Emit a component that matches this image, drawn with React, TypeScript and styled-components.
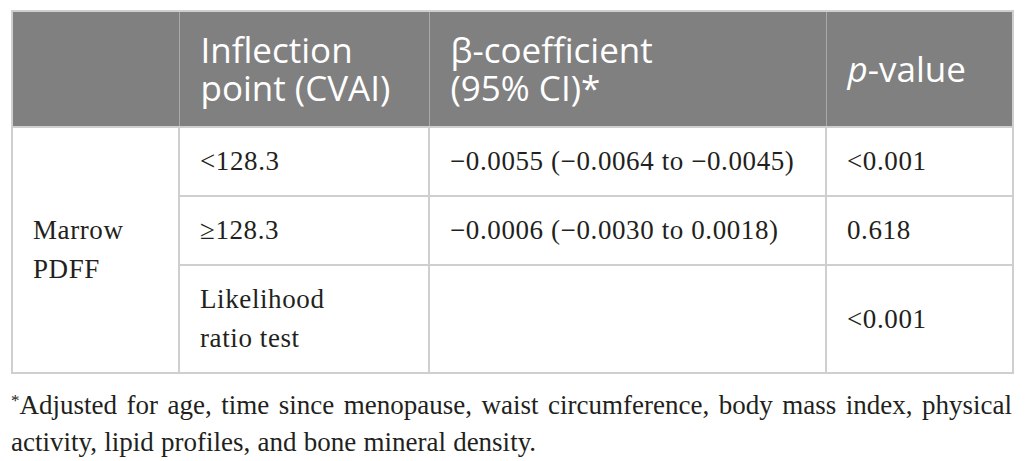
import styled, { createGlobalStyle } from "styled-components";

const GlobalStyle = createGlobalStyle`
  html, body {
    margin: 0;
    padding: 0;
    background: #ffffff;
  }
`;

const Page = styled.div`
  padding: 10px 14px 0 11px;
  width: 1001px;
`;

const Table = styled.table`
  width: 1001px;
  border-collapse: collapse;
  table-layout: fixed;
  border: 2px solid #cfcfcf;
`;

const HeadCell = styled.th`
  background: #808080;
  color: #ffffff;
  font-family: "Open Sans", "DejaVu Sans", sans-serif;
  font-weight: 400;
  font-size: 35px;
  line-height: 38px;
  text-align: left;
  vertical-align: middle;
  white-space: nowrap;
  padding: 19px 10px 19px 21px;
  border-left: 1px solid #a9a9a9;
  border-right: 1px solid #a9a9a9;
`;

const Cell = styled.td`
  font-family: "Liberation Serif", "Times New Roman", serif;
  font-size: 27px;
  letter-spacing: 0.6px;
  line-height: 39px;
  color: #231f20;
  padding: 14px 10px 14px 20px;
  border: 2px solid #cfcfcf;
  vertical-align: middle;
  white-space: nowrap;
`;

const Note = styled.p`
  margin: 13px 0 0 0;
  font-family: "Liberation Serif", "Times New Roman", serif;
  font-size: 27px;
  line-height: 37px;
  word-spacing: 0.5px;
  color: #231f20;
  text-align: justify;
`;

const Sup = styled.span`
  display: inline-block;
  font-size: 17px;
  line-height: 17px;
  vertical-align: top;
  margin-top: 5px;
`;

const rows = [
  { point: ["<128.3"], beta: "\u22120.0055 (\u22120.0064 to \u22120.0045)", p: "<0.001" },
  { point: ["\u2265128.3"], beta: "\u22120.0006 (\u22120.0030 to 0.0018)", p: "0.618" },
  { point: ["Likelihood", "ratio test"], beta: "", p: "<0.001" },
];

export default function App() {
  return (
    <>
      <GlobalStyle />
      <Page>
        <Table>
          <colgroup>
            <col style={{ width: 167 }} />
            <col style={{ width: 250 }} />
            <col style={{ width: 397 }} />
            <col style={{ width: 187 }} />
          </colgroup>
          <thead>
            <tr>
              <HeadCell />
              <HeadCell>
                Inflection
                <br />
                point (CVAI)
              </HeadCell>
              <HeadCell>
                β-coefficient
                <br />
                (95% CI)*
              </HeadCell>
              <HeadCell>
                <i>p</i>-value
              </HeadCell>
            </tr>
          </thead>
          <tbody>
            {rows.map((r, i) => (
              <tr key={i}>
                {i === 0 && (
                  <Cell rowSpan={3}>
                    Marrow
                    <br />
                    PDFF
                  </Cell>
                )}
                <Cell>
                  {r.point.map((line, j) => (
                    <span key={j}>
                      {j > 0 && <br />}
                      {line}
                    </span>
                  ))}
                </Cell>
                <Cell>{r.beta}</Cell>
                <Cell>{r.p}</Cell>
              </tr>
            ))}
          </tbody>
        </Table>
        <Note>
          <Sup>*</Sup>Adjusted for age, time since menopause, waist circumference, body mass index, physical
          activity, lipid profiles, and bone mineral density.
        </Note>
      </Page>
    </>
  );
}
